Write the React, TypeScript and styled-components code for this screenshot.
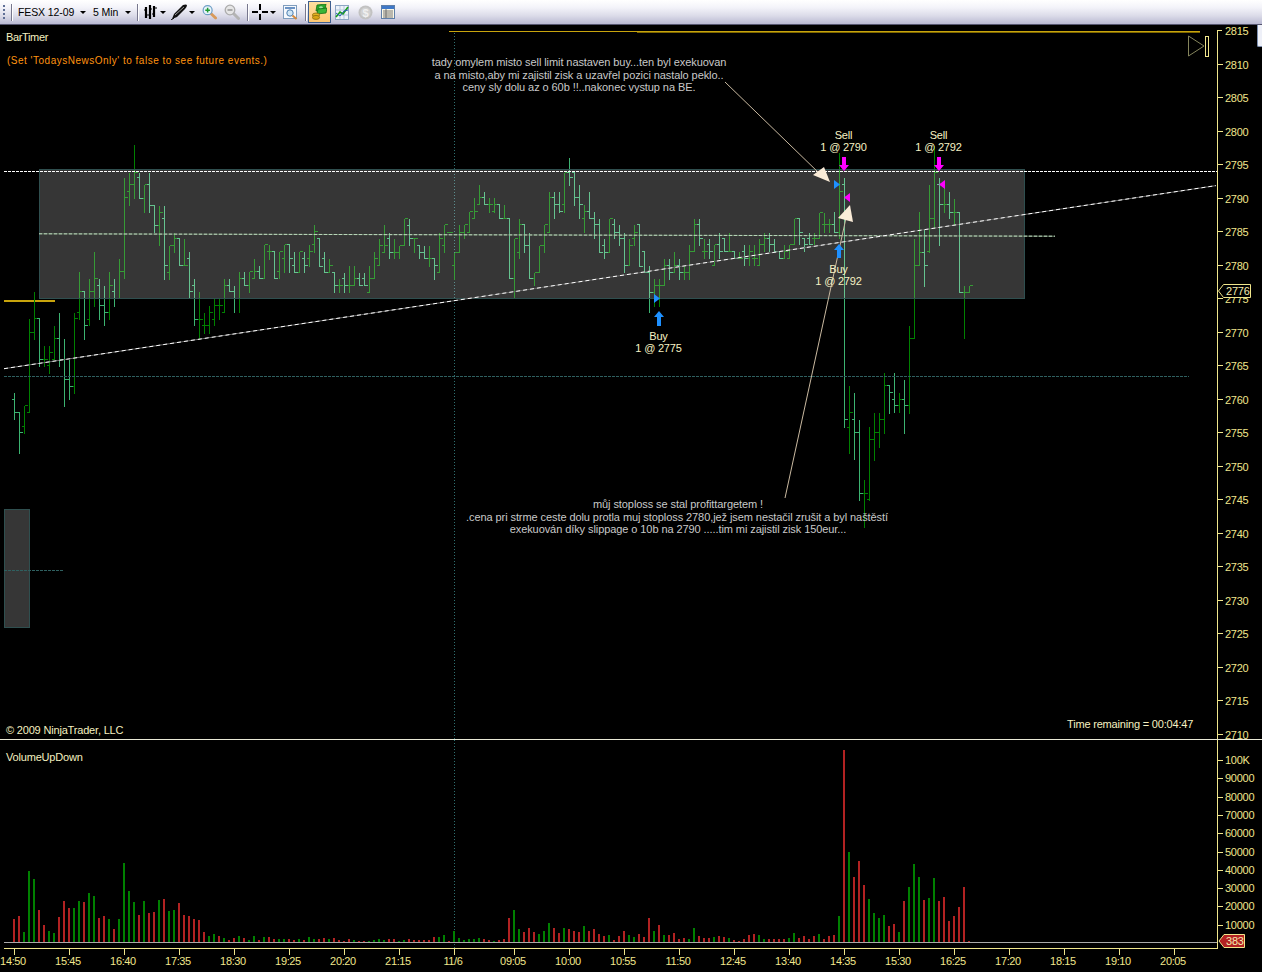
import React from "react";
import styled, { createGlobalStyle } from "styled-components";

const Global = createGlobalStyle`
  html, body { margin: 0; padding: 0; background: #000; overflow: hidden; }
  #root { width: 1262px; height: 972px; }
`;

const Page = styled.div`
  position: relative;
  width: 1262px;
  height: 972px;
  background: #000;
  display: flex;
  flex-direction: column;
  overflow: hidden;
`;

const Toolbar = styled.div`
  flex: 0 0 25px;
  box-sizing: border-box;
  height: 25px;
  display: flex;
  align-items: center;
  background: linear-gradient(#ffffff 0%, #f4f4fa 30%, #dcdce9 65%, #b9b9d2 100%);
  border-bottom: 1px solid #55556f;
  font: 10.5px "Liberation Sans", Arial, sans-serif;
  color: #000;
`;

const Slot = styled.div<{ $w: number; $ml: number }>`
  flex: 0 0 ${(p) => p.$w}px;
  width: ${(p) => p.$w}px;
  margin-left: ${(p) => p.$ml}px;
  height: 20px;
  display: flex;
  align-items: center;
  justify-content: center;
`;

const Gripper = styled(Slot)`
  flex-direction: column;
  justify-content: center;
  gap: 2px;
`;

const GripDot = styled.span`
  width: 2px;
  height: 2px;
  background: #5f6f96;
`;

const Separator = styled.div<{ $ml: number }>`
  flex: 0 0 1px;
  width: 1px;
  height: 17px;
  margin-left: ${(p) => p.$ml}px;
  background: #77778d;
  box-shadow: 1px 0 0 #fff;
`;

const Label = styled.span<{ $ml: number; $w: number }>`
  flex: 0 0 ${(p) => p.$w}px;
  width: ${(p) => p.$w}px;
  margin-left: ${(p) => p.$ml}px;
  white-space: nowrap;
  line-height: 20px;
  letter-spacing: -0.1px;
`;

const Caret = styled.span<{ $ml: number }>`
  flex: 0 0 auto;
  width: 0;
  height: 0;
  margin-left: ${(p) => p.$ml}px;
  margin-top: 1px;
  border-left: 3px solid transparent;
  border-right: 3px solid transparent;
  border-top: 3px solid #000;
`;

const ActiveButton = styled(Slot)`
  box-sizing: border-box;
  height: 22px;
  background: linear-gradient(#ffdf9f, #ffc873);
  border: 1px solid #3f5f8f;
`;

const CornerChip = styled.div`
  position: absolute;
  right: 0;
  top: 25px;
  width: 4px;
  height: 21px;
  background: #eef0f8;
  border-left: 1px solid #7d8fb0;
  border-bottom: 1px solid #7d8fb0;
  border-bottom-left-radius: 2px;
`;

const Pane = styled.svg<{ $h: number }>`
  display: block;
  flex: 0 0 ${(p) => p.$h}px;
  width: 1262px;
  height: ${(p) => p.$h}px;
  font-family: "Liberation Sans", Arial, sans-serif;
`;

const BarPath = styled.path<{ $down: boolean }>`
  fill: none;
  stroke: ${(p) => (p.$down ? "#3cb371" : "#008000")};
  stroke-width: 1;
  shape-rendering: crispEdges;
`;

const ZoneRect = styled.rect`
  fill: rgba(255, 255, 255, 0.21);
  stroke: #2f4f4f;
  stroke-width: 1;
  shape-rendering: crispEdges;
`;

const GoldLine = styled.line<{ $w: number; $dim?: boolean }>`
  stroke: ${(p) => (p.$dim ? "#7d6600" : "#c8a40c")};
  stroke-width: ${(p) => p.$w};
  shape-rendering: crispEdges;
`;

const TrendUnder = styled.line`
  stroke: #666;
  stroke-width: 1;
`;

const WhiteDash = styled.line`
  stroke: #fff;
  stroke-width: 1;
  stroke-dasharray: 4 3;
`;

const WhiteDashFlat = styled.line`
  stroke: #fff;
  stroke-width: 1;
  stroke-dasharray: 3 1;
  shape-rendering: crispEdges;
`;

const PaleUnder = styled.line`
  stroke: #6f8a6f;
  stroke-width: 1;
`;

const PaleDash = styled.line`
  stroke: #bcd6bc;
  stroke-width: 1;
  stroke-dasharray: 3 2;
`;

const TealDash = styled.line`
  stroke: #2f6060;
  stroke-width: 1;
  stroke-dasharray: 3 1;
  shape-rendering: crispEdges;
`;

const SessionLine = styled.line`
  stroke: #2f7070;
  stroke-width: 1;
  stroke-dasharray: 1 2;
  shape-rendering: crispEdges;
`;

const AxisStroke = styled.path`
  fill: none;
  stroke: #f0e68c;
  stroke-width: 1;
  shape-rendering: crispEdges;
`;

const DividerLine = styled.line`
  stroke: #e9e9d6;
  stroke-width: 1;
  shape-rendering: crispEdges;
`;

const BaseLine = styled.line`
  stroke: #a9a9a9;
  stroke-width: 1;
  shape-rendering: crispEdges;
`;

const AxisText = styled.text`
  fill: #f0e68c;
  font-size: 11px;
  letter-spacing: -0.25px;
`;

const TimeText = styled(AxisText)`
  text-anchor: middle;
  letter-spacing: -0.35px;
`;

const ChartTitle = styled.text`
  fill: #f5f0c0;
  font-size: 11px;
  letter-spacing: -0.18px;
`;

const TightTitle = styled(ChartTitle)`
  letter-spacing: -0.35px;
`;

const NewsNote = styled.text`
  fill: #ff9410;
  font-size: 10px;
  letter-spacing: 0.5px;
`;

const Note = styled.text`
  fill: #c9c9c9;
  font-size: 11px;
  text-anchor: middle;
  letter-spacing: -0.08px;
`;

const ExecText = styled.text`
  fill: #f7f2c4;
  font-size: 11px;
  text-anchor: middle;
  letter-spacing: -0.2px;
`;

const Leader = styled.line`
  stroke: #c9b9a0;
  stroke-width: 1;
`;

const LeaderHead = styled.polygon`
  fill: #faebd7;
`;

const Marker = styled.polygon<{ $c: string }>`
  fill: ${(p) => p.$c};
`;

const FlagShape = styled.polygon<{ $fill: string }>`
  fill: ${(p) => p.$fill};
  stroke: #f0e68c;
  stroke-width: 1;
`;

const FlagText = styled.text`
  fill: #f5ecb0;
  font-size: 11px;
  letter-spacing: -0.2px;
`;

const PlayTriangle = styled.polygon`
  fill: none;
  stroke: #85855c;
  stroke-width: 1;
`;

const PlayEnd = styled.rect`
  fill: none;
  stroke: #f0e68c;
  stroke-width: 1;
  shape-rendering: crispEdges;
`;

const VolumeBar = styled.rect<{ $up: boolean }>`
  fill: ${(p) => (p.$up ? "#008000" : "#b22222")};
  shape-rendering: crispEdges;
`;

type Row = [number, number, number, number];

const A: Row[] = [
  [787,868,808,847],[847,968,847,907],[826,908,889,826],[565,847,847,607],[484,626,607,565],[565,707,565,686],
  [645,707,686,686],[645,728,706,667],[586,686,686,625],[545,707,625,686],[625,828,686,748],[686,808,748,768],
  [545,788,768,565],[423,566,545,484],[484,626,484,586],[445,586,566,484],[364,527,484,445],[445,566,466,526],
  [466,586,526,545],[423,566,545,466],[445,527,484,505],[384,505,505,424],[140,445,424,202],[125,225,183,163],
  [42,204,163,125],[125,204,142,204],[163,245,204,163],[125,245,163,224],[224,305,224,284],[224,345,284,245],
  [224,446,265,406],[345,446,425,345],[305,365,345,325],[325,406,325,406],[325,406,406,406],[364,504,385,484],
  [445,586,466,566],[484,626,566,566],[545,608,586,586],[526,608,586,545],[505,586,566,526],[505,566,526,526],
  [445,545,545,466],[445,484,466,484],[466,545,484,505],[423,545,505,445],[423,466,445,466],[423,486,466,424],
  [384,445,445,424],[405,445,424,445],[343,445,445,343],[343,386,364,364],[364,445,364,445],[364,445,424,364],
  [343,425,385,343],[343,425,343,385],[364,425,405,425],[364,425,425,364],[364,425,385,405],[343,407,385,364],
  [282,365,343,304],[325,407,325,407],
];
const B: Row[] = [
  [333,395,355,395],[355,395,395,376],[395,455,395,436],[415,455,436,436],[395,455,415,436],[376,455,436,436],
  [376,436,436,415],[395,436,415,436],[395,436,415,436],[376,455,455,415],[333,415,415,355],[295,376,376,315],
  [253,335,335,315],[275,355,295,335],[295,355,335,335],[315,355,335,315],[235,315,315,235],[235,315,255,295],
  [295,335,295,295],[315,355,315,335],[315,355,335,355],[315,377,355,355],[355,416,355,376],[275,395,395,295],
  [253,335,315,253],[275,275,275,275],[335,418,376,335],[253,335,335,275],[253,295,275,253],[213,275,275,213],
  [172,235,235,213],[132,193,193,172],[153,193,172,193],[172,215,193,193],[172,215,213,193],[193,235,193,235],
  [193,235,235,235],[235,415,235,415],[295,473,415,295],[235,355,335,253],[253,335,253,315],[275,415,315,415],
  [395,436,415,395],[315,395,395,315],[253,335,315,253],[153,275,275,172],[153,235,172,193],[153,215,193,213],
  [95,215,193,95],[52,135,95,112],[95,195,95,172],[132,235,172,193],[193,275,235,213],[153,235,213,235],
  [213,295,235,253],[235,335,253,335],[295,355,315,335],[235,335,335,235],[235,295,253,275],[253,315,275,295],
  [275,395,295,376],[295,376,376,315],[253,315,295,275],[253,377,253,377],
];
const C: Row[] = [
  [378,440,378,440],[420,560,440,500],[460,543,500,481],[460,543,481,481],[400,481,481,420],[400,461,420,440],
  [378,440,440,420],[400,461,420,440],[420,461,440,440],[358,461,440,378],[280,378,378,298],[280,360,298,340],
  [340,400,378,378],[340,400,358,378],[358,420,420,358],[320,400,358,378],[340,378,340,378],[320,378,378,378],
  [378,400,378,398],[378,400,398,398],[358,420,378,398],[358,420,398,378],[358,420,400,400],[340,420,420,358],
  [320,378,358,340],[320,378,340,358],[340,378,358,378],[378,400,378,400],[358,400,400,378],[358,400,400,358],
  [280,358,358,280],[280,358,280,320],[340,378,340,358],[320,358,340,358],[320,358,340,340],[260,340,340,260],
  [260,320,297,297],[280,320,297,297],[258,320,297,320],[80,340,320,198],[157,906,178,882],
];
const D: Row[] = [
  [136,338,260,217],[156,358,238,277],[238,480,277,460],[418,560,460,460],[258,480,478,298],[217,360,298,277],
  [217,320,277,238],[96,279,238,136],[136,219,136,156],[96,217,178,196],[156,217,196,178],[117,279,178,196],
];
const E: Row[] = [
  [600,864,840,640],[340,640,640,420],[258,420,420,380],[310,482,380,420],[178,380,378,280],[60,310,280,140],
  [157,360,178,238],[178,260,238,238],[198,280,238,260],[218,300,260,260],[258,500,260,500],[480,640,500,500],
  [480,500,500,481],
];

const bars = [
  ...A.map((r) => ({ r, base: 130 })),
  ...B.map((r) => ({ r, base: 140 })),
  ...C.map((r) => ({ r, base: 125 })),
  ...D.map((r) => ({ r, base: 340 })),
  ...E.map((r) => ({ r, base: 125 })),
];

const py = (z: number, base: number) => Math.round(base + z / 3) + 0.5;

function barPath(down: boolean) {
  let d = "";
  bars.forEach(({ r, base }, i) => {
    const [h, l, o, c] = r;
    const isDown = c > o;
    if (isDown !== down) return;
    const x = 14.5 + 5 * i;
    d += `M${x} ${py(h, base)}V${py(l, base) + 0.5}`;
    d += `M${x - 3} ${py(o, base)}H${x}`;
    d += `M${x} ${py(c, base)}H${x + 3}`;
  });
  return d;
}

const volA = "r23 r26 g10 g71 g63 r32 r17 g11 g9 r25 r41 r34 g34 g41 r40 g49 g46 r24 r26 g23 r13 g23 g79 g51 g40 r27 g41 r29 r30 g42 r43 g31 g32 r39 r27 r26 r23 r22 r10 g6 g8 r6 g4 r2 r4 g6 r4 g2 g6 r2 g5 r5 r3 g3 g3 r3 r2 g3 r2 g5 g3 r3 r4 g3 r4 r2 r1 r3 g2 r1 r1 g1 g2 g3 g2 r3 r3 g1 g2 r3 r2 r2 r2 r2 r5 g5 g7 r1 g11 g4 g2 g3 g3 g4 r3 r2 g1 r2";
const volB = "r3 r24 g32 g13 r10 r14 r10 g8 g11 g19 r14 r9 g14 r13 r11 r10 g16 r11 r13 r8 r6 g7 r2 r6 r11 g7 g5 r8 r5 r24 g11 r17 g7 r7 r9 r3 r4 g3 g14 r6 r4 r4 g5 r6 r5 g4 r2 r1 r3 r7 r8 g7 g3 r3 r3 r3 r3 g4 g9 r4 r6 r3 r6 g8 r3 r6 r7 g26 r192 g90 r65 r81 r57 g43 g29 g24 g27 r16 r18 g10 r41 g55 g78 g65 r42 g44 g64 r41 r45 r21 r26 r35 r55 r1";
const volumes = `${volA} ${volB}`.split(" ").map((s) => ({ up: s[0] === "g", h: Number(s.slice(1)) }));

const priceLevels = Array.from({ length: 22 }, (_, i) => 2815 - i * 5);
const priceY = (p: number) => Math.round(30 + (2815 - p) * 6.7);
const volumeLabels = ["100K", "90000", "80000", "70000", "60000", "50000", "40000", "30000", "20000", "10000"];
const times = ["14:50","15:45","16:40","17:35","18:30","19:25","20:20","21:15","11/6","09:05","10:00","10:55","11:50","12:45","13:40","14:35","15:30","16:25","17:20","18:15","19:10","20:05"];
const timeX = (i: number) => 14 + 55 * i + (i >= 9 ? 5 : 0);

const upArrow = (x: number, top: number, bottom: number) =>
  `${x},${top} ${x + 5},${top + 6} ${x + 2},${top + 6} ${x + 2},${bottom} ${x - 2},${bottom} ${x - 2},${top + 6} ${x - 5},${top + 6}`;
const downArrow = (x: number, top: number, bottom: number) =>
  `${x - 2},${top} ${x + 2},${top} ${x + 2},${bottom - 6} ${x + 5},${bottom - 6} ${x},${bottom} ${x - 5},${bottom - 6} ${x - 2},${bottom - 6}`;

const BarsIcon = () => (
  <svg width="13" height="15" viewBox="0 0 13 15">
    <path d="M2 2v11M6 0v14M10 1v11" stroke="#000" strokeWidth="2.2" fill="none" />
    <path d="M0 5h2M3 10h3M6 4h2M8 9h2M11 3h2" stroke="#000" strokeWidth="1.2" fill="none" />
  </svg>
);

const PenIcon = () => (
  <svg width="17" height="16" viewBox="0 0 17 16">
    <path d="M1 15 L3 10 L12 1 Q15 0 16 1 Q16 3 14 5 L6 13 Z" fill="#111" />
    <path d="M4 11 L13 3" stroke="#9a9a9a" strokeWidth="1" />
    <path d="M0 16 L3 14" stroke="#000" strokeWidth="1" />
  </svg>
);

const Magnifier = ({ plus, muted }: { plus: boolean; muted: boolean }) => (
  <svg width="16" height="16" viewBox="0 0 16 16">
    <line x1="9.5" y1="9.5" x2="14.5" y2="14.5" stroke={muted ? "#b4b4b4" : "#d89a5a"} strokeWidth="3" strokeLinecap="round" />
    <circle cx="6" cy="6" r="4.8" fill={muted ? "#e6e6e6" : "#e8f4fb"} stroke={muted ? "#acacac" : "#6f9fc6"} strokeWidth="1.3" />
    <path d={plus ? "M3.5 6h5M6 3.5v5" : "M3.5 6h5"} stroke={muted ? "#9a9a9a" : "#1d9a33"} strokeWidth="1.6" />
  </svg>
);

const CrossIcon = () => (
  <svg width="16" height="16" viewBox="0 0 16 16">
    <path d="M0 8h6M10 8h6M8 0v6M8 10v6" stroke="#000" strokeWidth="2" fill="none" />
  </svg>
);

const PropsIcon = () => (
  <svg width="15" height="15" viewBox="0 0 15 15">
    <rect x="0.5" y="0.5" width="13" height="13" fill="#f6f9fd" stroke="#7f9dbd" />
    <rect x="2" y="2" width="10" height="2" fill="#6c93c4" />
    <circle cx="7" cy="8" r="3.2" fill="#cfe6f6" stroke="#4f7fb0" />
    <line x1="9.5" y1="10.5" x2="13.5" y2="14" stroke="#d68a3d" strokeWidth="2" />
  </svg>
);

const MoneyIcon = () => (
  <svg width="15" height="16" viewBox="0 0 15 16">
    <path d="M5 1 L14 0 L13 6 L4 7 Z" fill="#2aa52a" stroke="#146f14" strokeWidth="0.8" />
    <ellipse cx="9" cy="3.6" rx="1.8" ry="1.4" fill="#9fe09f" />
    <path d="M6 5 L15 4 L14 9 L5 10 Z" fill="#38b538" stroke="#146f14" strokeWidth="0.8" />
    <ellipse cx="4" cy="11" rx="3.6" ry="2" fill="#e6b422" stroke="#8c6a0a" strokeWidth="0.8" />
    <ellipse cx="4" cy="13.4" rx="3.6" ry="2" fill="#d9a414" stroke="#8c6a0a" strokeWidth="0.8" />
  </svg>
);

const LineChartIcon = () => (
  <svg width="14" height="15" viewBox="0 0 14 15">
    <rect x="0.5" y="0.5" width="13" height="14" fill="#eef3fa" stroke="#8ea6c4" />
    <path d="M5 1v13M9 1v13M1 5h12M1 10h12" stroke="#b5c6dc" strokeWidth="1" />
    <path d="M1 12 L5 7 L8 9 L13 2" stroke="#18a018" strokeWidth="1.6" fill="none" />
    <path d="M1 8 L5 11 L9 6 L13 5" stroke="#2a5fb0" strokeWidth="1" fill="none" />
  </svg>
);

const CoinIcon = () => (
  <svg width="15" height="15" viewBox="0 0 15 15">
    <circle cx="7.5" cy="7.5" r="7" fill="#c2c2c2" />
    <circle cx="7.5" cy="7.5" r="5" fill="#d2d2d2" />
    <text x="7.5" y="11.5" textAnchor="middle" fontSize="11" fontWeight="700" fill="#f0f0f0" fontFamily="Liberation Sans">$</text>
  </svg>
);

const TableIcon = () => (
  <svg width="14" height="14" viewBox="0 0 14 14">
    <rect x="0.5" y="0.5" width="13" height="13" fill="#fbf8e6" stroke="#5f7fa8" />
    <rect x="1" y="1" width="12" height="3" fill="#3f78c8" />
    <path d="M2 6h10M2 8h10M2 10h10M2 12h10M5 4v9" stroke="#6a6a6a" strokeWidth="0.9" fill="none" />
  </svg>
);

export default function App() {
  return (
    <Page>
      <Global />
      <Toolbar>
        <Gripper $w={3} $ml={2}>
          <GripDot /><GripDot /><GripDot /><GripDot />
        </Gripper>
        <Separator $ml={6} />
        <Label $ml={6} $w={55}>FESX 12-09</Label>
        <Caret $ml={7} />
        <Label $ml={7} $w={25}>5 Min</Label>
        <Caret $ml={7} />
        <Separator $ml={6} />
        <Slot $w={13} $ml={6}><BarsIcon /></Slot>
        <Caret $ml={3} />
        <Slot $w={17} $ml={5}><PenIcon /></Slot>
        <Caret $ml={1} />
        <Slot $w={15} $ml={7}><Magnifier plus muted={false} /></Slot>
        <Slot $w={16} $ml={7}><Magnifier plus={false} muted /></Slot>
        <Separator $ml={7} />
        <Slot $w={16} $ml={4}><CrossIcon /></Slot>
        <Caret $ml={2} />
        <Slot $w={15} $ml={7}><PropsIcon /></Slot>
        <Separator $ml={7} />
        <ActiveButton $w={23} $ml={2}><MoneyIcon /></ActiveButton>
        <Slot $w={14} $ml={4}><LineChartIcon /></Slot>
        <Slot $w={15} $ml={9}><CoinIcon /></Slot>
        <Slot $w={14} $ml={8}><TableIcon /></Slot>
      </Toolbar>
      <CornerChip />

      <Pane $h={715} viewBox="0 25 1262 715">
        <SessionLine x1={454.5} y1={33} x2={454.5} y2={740} />
        <GoldLine $w={1} x1={449} y1={31.5} x2={1200} y2={31.5} />
        <GoldLine $w={1} $dim x1={637} y1={32.5} x2={1200} y2={32.5} />
        <GoldLine $w={2} x1={4} y1={301} x2={55} y2={301} />

        <BarPath $down={false} d={barPath(false)} />
        <BarPath $down d={barPath(true)} />

        <ZoneRect x={39.5} y={169.5} width={985} height={129} />
        <ZoneRect x={4.5} y={509.5} width={25} height={118} />
        <TealDash x1={4} y1={376.5} x2={1189} y2={376.5} />
        <TealDash x1={4} y1={570.5} x2={64} y2={570.5} />
        <PaleUnder x1={39} y1={233.8} x2={1055} y2={236.2} />
        <PaleDash x1={39} y1={233.8} x2={1055} y2={236.2} />
        <WhiteDashFlat x1={4} y1={171.5} x2={1217} y2={171.5} />
        <TrendUnder x1={4} y1={368.7} x2={1216} y2={185.6} />
        <WhiteDash x1={4} y1={368.7} x2={1216} y2={185.6} />

        <Leader x1={725} y1={82} x2={820} y2={174} />
        <LeaderHead points="830,182 813,175 824,167" />
        <Leader x1={785} y1={498} x2={846} y2={218} />
        <LeaderHead points="850,205 838,218 853,222" />

        <Marker $c="#1e90ff" points={upArrow(659, 311, 326)} />
        <Marker $c="#1e90ff" points={upArrow(839, 244, 258)} />
        <Marker $c="#ff00ff" points={downArrow(844, 157, 171)} />
        <Marker $c="#ff00ff" points={downArrow(939, 157, 171)} />
        <Marker $c="#1e90ff" points="834,180 840,184.5 834,189" />
        <Marker $c="#1e90ff" points="654,294 660,298.5 654,303" />
        <Marker $c="#ff00ff" points="850,193 844,197.5 850,202" />
        <Marker $c="#ff00ff" points="945,180 939,184.5 945,189" />

        <ExecText x={843.5} y={139}>Sell</ExecText>
        <ExecText x={843.5} y={151}>1 @ 2790</ExecText>
        <ExecText x={938.5} y={139}>Sell</ExecText>
        <ExecText x={938.5} y={151}>1 @ 2792</ExecText>
        <ExecText x={838.5} y={273}>Buy</ExecText>
        <ExecText x={838.5} y={285}>1 @ 2792</ExecText>
        <ExecText x={658.5} y={340}>Buy</ExecText>
        <ExecText x={658.5} y={352}>1 @ 2775</ExecText>

        <Note x={579} y={66}>tady omylem misto sell limit nastaven buy...ten byl exekuovan</Note>
        <Note x={579} y={79}>a na misto,aby mi zajistil zisk a uzavřel pozici nastalo peklo..</Note>
        <Note x={579} y={91}>ceny sly dolu az o 60b !!..nakonec vystup na BE.</Note>
        <Note x={678} y={508}>můj stoploss se stal profittargetem !</Note>
        <Note x={677} y={521}>.cena pri strme ceste dolu protla muj stoploss 2780,jež jsem nestačil zrušit a byl naštěstí</Note>
        <Note x={678} y={533}>exekuován díky slippage o 10b na 2790 .....tim mi zajistil zisk 150eur...</Note>

        <TightTitle x={6} y={41}>BarTimer</TightTitle>
        <NewsNote x={7} y={64}>(Set 'TodaysNewsOnly' to false to see future events.)</NewsNote>
        <ChartTitle x={6} y={734}>© 2009 NinjaTrader, LLC</ChartTitle>
        <ChartTitle x={1067} y={728}>Time remaining = 00:04:47</ChartTitle>

        <PlayTriangle points="1188.5,36 1204,46 1188.5,56" />
        <PlayEnd x={1205.5} y={36} width={3} height={20} />

        <AxisStroke d={`M1222 30.5H1217.5V739 ${priceLevels.slice(1).map((p) => `M1217.5 ${priceY(p) + 0.5}H1223`).join("")}`} />
        {priceLevels.map((p) => (
          <AxisText key={p} x={1225} y={priceY(p) + 5}>{p}</AxisText>
        ))}
        <FlagShape $fill="#000" points="1218.5,291 1223.5,284.5 1250.5,284.5 1250.5,297.5 1223.5,297.5" />
        <FlagText x={1226} y={295}>2776</FlagText>
        <DividerLine x1={0} y1={739.5} x2={1262} y2={739.5} />
      </Pane>

      <Pane $h={232} viewBox="0 740 1262 232">
        <SessionLine x1={454.5} y1={740} x2={454.5} y2={948} />
        <ChartTitle x={6} y={761}>VolumeUpDown</ChartTitle>
        {volumes.map((v, i) => (
          <VolumeBar key={i} $up={v.up} x={13 + 5 * i} y={942 - v.h} width={2} height={v.h} />
        ))}
        <BaseLine x1={4} y1={942.5} x2={1217} y2={942.5} />
        <AxisStroke
          d={`M1217.5 740V948.5H4 ${volumeLabels.map((_, i) => `M1217.5 ${Math.round(760 + i * 18.3) + 0.5}H1223`).join("")} ${times.map((_, i) => `M${timeX(i) + 0.5} 948V955`).join("")}`}
        />
        {volumeLabels.map((l, i) => (
          <AxisText key={l} x={1225} y={Math.round(760 + i * 18.3) + 4}>{l}</AxisText>
        ))}
        {times.map((t, i) => (
          <TimeText key={t + i} x={timeX(i) - 1} y={965}>{t}</TimeText>
        ))}
        <FlagShape $fill="#b22222" points="1219,941 1224,934.5 1244.5,934.5 1244.5,947.5 1224,947.5" />
        <FlagText x={1226} y={945}>383</FlagText>
      </Pane>
    </Page>
  );
}
